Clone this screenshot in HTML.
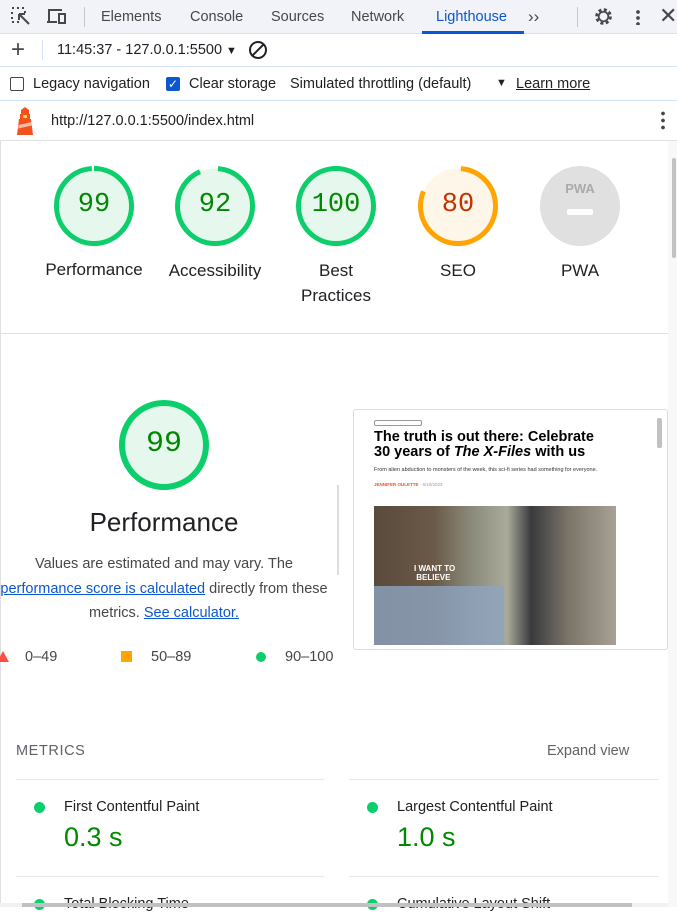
<!DOCTYPE html>
<html><head><meta charset="utf-8"><style>
*{box-sizing:border-box;margin:0;padding:0}
body{width:677px;height:907px;overflow:hidden;background:#fff;font-family:"Liberation Sans",sans-serif;color:#202124;position:relative}
.abs{position:absolute}
.tabbar{left:0;top:0;width:677px;height:34px;background:#f1f3f9;border-bottom:1px solid #d3e3fd}
.tab{top:0;height:34px;line-height:34px;font-size:14.5px;color:#474747}
.row{left:0;width:677px;border-bottom:1px solid #d3e3fd;background:#fff}
.t{font-size:14.5px;color:#202124;white-space:nowrap}
.lbl{font-size:17px;color:#202124;text-align:center;width:120px;line-height:25px}
.num{font-family:"Liberation Mono",monospace;font-size:27px;text-align:center}
</style></head><body>
<div class="abs tabbar"></div>
<svg class="abs" style="left:10px;top:6px" width="24" height="22" viewBox="0 0 24 22" fill="none" stroke="#474747" stroke-width="2"><path d="M2 2h2M7 2h2M12 2h2M2 6v2M2 11v2M2 16h2M7 16h2M15 5v2" stroke-dasharray="2 2"/><path d="M9 8l10 10M9 8h6M9 8v6"/></svg>
<svg class="abs" style="left:46px;top:7px" width="22" height="20" viewBox="0 0 22 20" fill="none" stroke="#474747" stroke-width="2"><path d="M3 14V3h13M1 15h10"/><rect x="13" y="7" width="6" height="9"/></svg>
<div class="abs" style="left:84px;top:7px;width:1px;height:20px;background:#c7c7c7"></div>
<div class="abs tab" style="left:101px">Elements</div>
<div class="abs tab" style="left:190px">Console</div>
<div class="abs tab" style="left:271px">Sources</div>
<div class="abs tab" style="left:351px">Network</div>
<div class="abs tab" style="left:436px;color:#0b57d0">Lighthouse</div>
<div class="abs" style="left:422px;top:31px;width:102px;height:3px;background:#0b57d0"></div>
<div class="abs tab" style="left:528px;font-size:17px">&#8250;&#8250;</div>
<div class="abs" style="left:577px;top:7px;width:1px;height:20px;background:#c7c7c7"></div>
<svg class="abs" style="left:593px;top:6px" width="21" height="21" viewBox="0 0 24 24"><circle cx="12" cy="12" r="8" fill="none" stroke="#474747" stroke-width="3" stroke-dasharray="3.5 2.8"/><circle cx="12" cy="12" r="5.5" fill="none" stroke="#474747" stroke-width="2"/></svg>
<div class="abs" style="left:636px;top:9px;width:4px;height:16px;background:radial-gradient(circle,#474747 1.7px,transparent 2px) 0 0/4px 6px"></div>
<div class="abs" style="left:659px;top:3px;font-size:22px;color:#474747">&#10005;</div>

<div class="abs row" style="top:34px;height:33px"></div>
<div class="abs" style="left:11px;top:36px;font-size:24px;color:#474747;font-weight:300">+</div>
<div class="abs" style="left:42px;top:40px;width:1px;height:20px;background:#d3e3fd"></div>
<div class="abs t" style="left:57px;top:42px">11:45:37 - 127.0.0.1:5500 <span style="font-size:11px">&#9660;</span></div>
<svg class="abs" style="left:248px;top:40px" width="20" height="20" viewBox="0 0 20 20" fill="none" stroke="#202124" stroke-width="2"><circle cx="10" cy="10" r="8"/><path d="M4.5 15.5l11-11"/></svg>

<div class="abs row" style="top:67px;height:34px"></div>
<div class="abs" style="left:10px;top:77px;width:14px;height:14px;border:1.5px solid #474747;border-radius:2px"></div>
<div class="abs t" style="left:33px;top:76px">Legacy navigation</div>
<div class="abs" style="left:166px;top:77px;width:14px;height:14px;background:#0b57d0;border-radius:2px;color:#fff;font-size:12px;line-height:14px;text-align:center">&#10003;</div>
<div class="abs t" style="left:189px;top:76px">Clear storage</div>
<div class="abs t" style="left:290px;top:76px">Simulated throttling (default)</div>
<div class="abs" style="left:496px;top:77px;font-size:11px">&#9660;</div>
<div class="abs t" style="left:516px;top:76px;text-decoration:underline">Learn more</div>

<div class="abs row" style="top:101px;height:40px;border-bottom:1px solid #e0e0e0"></div>
<svg class="abs" style="left:13px;top:106px" width="24" height="30" viewBox="0 0 24 30"><path d="M8 4l4-3 4 3v4H8z" fill="#f4511e"/><rect x="7" y="8" width="10" height="5" fill="#f4511e"/><rect x="10" y="9" width="4" height="3" fill="#fdd835"/><path d="M6 13h12l2 16H4z" fill="#f4511e"/><path d="M5.5 19l13-3 .4 3.5-13.7 3z" fill="#fff" opacity=".6"/></svg>
<div class="abs t" style="left:51px;top:113px">http://127.0.0.1:5500/index.html</div>
<div class="abs" style="left:661px;top:110px;width:4px;height:20px;background:radial-gradient(circle,#474747 1.7px,transparent 2px) 0 0/4px 7px"></div>

<div class="abs" style="left:668px;top:141px;width:9px;height:766px;background:#f8f8f8"></div>
<div class="abs" style="left:672px;top:158px;width:4px;height:100px;background:#c1c1c1;border-radius:2px"></div>
<div class="abs" style="left:0;top:141px;width:1px;height:766px;background:#e0e0e0"></div>

<svg class="abs" style="left:0;top:141px" width="668" height="130">
<g transform="rotate(-90)">
<circle cx="-65" cy="94" r="37.5" fill="#e6f7ee" stroke="#0cce6b" stroke-width="5" stroke-dasharray="233 300"/>
<circle cx="-65" cy="215" r="37.5" fill="#e6f7ee" stroke="#0cce6b" stroke-width="5" stroke-dasharray="216.8 300" stroke-dashoffset="-3"/>
<circle cx="-65" cy="336" r="37.5" fill="#e6f7ee" stroke="#0cce6b" stroke-width="5"/>
<circle cx="-65" cy="458" r="37.5" fill="#fff6ea" stroke="#ffa400" stroke-width="5" stroke-dasharray="188.5 300" stroke-dashoffset="-3"/>
<circle cx="-65" cy="580" r="40" fill="#e0e0e0"/>
</g>
<text x="580" y="52" font-family="Liberation Sans" font-weight="bold" font-size="13" fill="#aaa" text-anchor="middle">PWA</text>
<rect x="567" y="68" width="26" height="6" rx="2" fill="#fff"/>
</svg>
<div class="abs num" style="left:54px;top:190px;width:80px;color:#008800">99</div>
<div class="abs num" style="left:175px;top:190px;width:80px;color:#008800">92</div>
<div class="abs num" style="left:296px;top:190px;width:80px;color:#008800">100</div>
<div class="abs num" style="left:418px;top:190px;width:80px;color:#c33300">80</div>
<div class="abs lbl" style="left:34px;top:257px">Performance</div>
<div class="abs lbl" style="left:155px;top:258px">Accessibility</div>
<div class="abs lbl" style="left:276px;top:258px">Best<br>Practices</div>
<div class="abs lbl" style="left:398px;top:258px">SEO</div>
<div class="abs lbl" style="left:520px;top:258px">PWA</div>
<div class="abs" style="left:1px;top:333px;width:667px;height:1px;background:#e0e0e0"></div>

<svg class="abs" style="left:110px;top:390px" width="110" height="110"><circle cx="54" cy="55" r="42" fill="#e6f7ee" stroke="#0cce6b" stroke-width="6"/></svg>
<div class="abs num" style="left:124px;top:427px;width:80px;font-size:30px;color:#008800">99</div>
<div class="abs" style="left:64px;top:507px;width:200px;text-align:center;font-size:26px">Performance</div>
<div class="abs" style="left:-36px;top:552px;width:400px;text-align:center;font-size:14.5px;line-height:24.5px;color:#474747;white-space:nowrap">Values are estimated and may vary. The<br><span style="color:#0b57d0;text-decoration:underline">performance score is calculated</span> directly from these<br>metrics. <span style="color:#0b57d0;text-decoration:underline">See calculator.</span></div>
<div class="abs" style="left:337px;top:485px;width:2px;height:90px;background:#ddd"></div>
<svg class="abs" style="left:0;top:650px" width="10" height="14"><path d="M-3 12L3 1 9 12z" fill="#ff4e42"/></svg>
<div class="abs t" style="left:25px;top:649px;color:#474747">0–49</div>
<div class="abs" style="left:121px;top:651px;width:11px;height:11px;background:#ffa400"></div>
<div class="abs t" style="left:151px;top:649px;color:#474747">50–89</div>
<div class="abs" style="left:256px;top:652px;width:10px;height:10px;border-radius:50%;background:#0cce6b"></div>
<div class="abs t" style="left:285px;top:649px;color:#474747">90–100</div>

<div class="abs" style="left:353px;top:409px;width:315px;height:241px;border:1px solid #dadce0;border-radius:3px;overflow:hidden;background:#fff">
 <div class="abs" style="left:20px;top:10px;width:48px;height:6px;border:1px solid #999;border-radius:2px"></div>
 <div class="abs" style="left:20px;top:20px;font-weight:bold;font-size:14.5px;line-height:15px;color:#000;white-space:nowrap">The truth is out there: Celebrate<br>30 years of <i>The X-Files</i> with us</div>
 <div class="abs" style="left:20px;top:57px;font-size:5.5px;color:#333;white-space:nowrap">From alien abduction to monsters of the week, this sci-fi series had something for everyone.</div>
 <div class="abs" style="left:20px;top:72px;font-size:4.5px;color:#e8532a;font-weight:bold">JENNIFER OULETTE <span style="color:#999;font-weight:normal">· 6/10/2023</span></div>
 <div class="abs" style="left:20px;top:96px;width:242px;height:139px;background:linear-gradient(90deg,#5a4a3c 0,#6b5a48 25%,#8a8a7a 40%,#a9aa9a 55%,#3a3a3e 65%,#7a7468 80%,#a8a296 100%)">
  <div class="abs" style="left:0;top:80px;width:130px;height:59px;background:#8fa4c0;opacity:.8"></div>
  <div class="abs" style="left:40px;top:58px;color:#fff;font-weight:bold;font-size:8px;line-height:9px">I WANT TO<br>&nbsp;BELIEVE</div>
 </div>
 <div class="abs" style="left:303px;top:8px;width:5px;height:30px;background:#c1c1c1;border-radius:2px"></div>
</div>

<div class="abs" style="left:16px;top:743px;font-size:14.5px;letter-spacing:.6px;color:#5f6368">METRICS</div>
<div class="abs" style="left:547px;top:743px;font-size:14.5px;color:#5f6368">Expand view</div>
<div class="abs" style="left:16px;top:779px;width:308px;height:1px;background:#e8e8e8"></div>
<div class="abs" style="left:349px;top:779px;width:309px;height:1px;background:#e8e8e8"></div>
<div class="abs" style="left:16px;top:876px;width:308px;height:1px;background:#e8e8e8"></div>
<div class="abs" style="left:349px;top:876px;width:309px;height:1px;background:#e8e8e8"></div>
<div class="abs" style="left:34px;top:802px;width:11px;height:11px;border-radius:50%;background:#0cce6b"></div>
<div class="abs t" style="left:64px;top:799px">First Contentful Paint</div>
<div class="abs" style="left:64px;top:822px;font-size:27px;color:#008800">0.3 s</div>
<div class="abs" style="left:367px;top:802px;width:11px;height:11px;border-radius:50%;background:#0cce6b"></div>
<div class="abs t" style="left:397px;top:799px">Largest Contentful Paint</div>
<div class="abs" style="left:397px;top:822px;font-size:27px;color:#008800">1.0 s</div>
<div class="abs" style="left:34px;top:899px;width:11px;height:11px;border-radius:50%;background:#0cce6b"></div>
<div class="abs t" style="left:64px;top:896px">Total Blocking Time</div>
<div class="abs" style="left:367px;top:899px;width:11px;height:11px;border-radius:50%;background:#0cce6b"></div>
<div class="abs t" style="left:397px;top:896px">Cumulative Layout Shift</div>
<div class="abs" style="left:0;top:903px;width:668px;height:4px;background:#f1f1f1"></div>
<div class="abs" style="left:22px;top:903px;width:610px;height:4px;background:#c1c1c1"></div>
</body></html>
